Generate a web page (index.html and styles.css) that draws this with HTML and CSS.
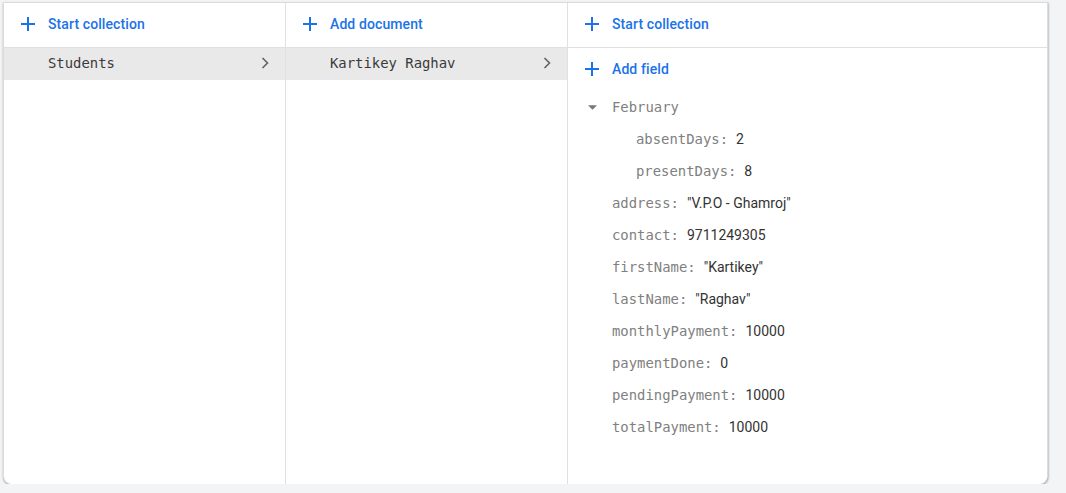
FILE: index.html
```html
<!DOCTYPE html>
<html>
<head>
<meta charset="utf-8">
<link rel="stylesheet" href="styles.css">
</head>
<body>
<div class="card">
  <div class="col">
    <div class="head">
      <svg class="plus" viewBox="0 0 14 14"><path d="M7 0v14M0 7h14"/></svg>
      <span>Start collection</span>
    </div>
    <div class="item sel">
      <span class="mono">Students</span>
      <svg class="chev" viewBox="0 0 8 12"><path d="M1.5 1l5 5-5 5"/></svg>
    </div>
  </div>
  <div class="col">
    <div class="head">
      <svg class="plus" viewBox="0 0 14 14"><path d="M7 0v14M0 7h14"/></svg>
      <span>Add document</span>
    </div>
    <div class="item sel">
      <span class="mono">Kartikey Raghav</span>
      <svg class="chev" viewBox="0 0 8 12"><path d="M1.5 1l5 5-5 5"/></svg>
    </div>
  </div>
  <div class="col last">
    <div class="head">
      <svg class="plus" viewBox="0 0 14 14"><path d="M7 0v14M0 7h14"/></svg>
      <span>Start collection</span>
    </div>
    <div class="head nob">
      <svg class="plus" viewBox="0 0 14 14"><path d="M7 0v14M0 7h14"/></svg>
      <span>Add field</span>
    </div>
    <div class="fields">
      <div class="f map"><svg class="tri" viewBox="0 0 10 5"><path d="M0 0h10L5 5z"/></svg><span class="k">February</span></div>
      <div class="f sub"><span class="k">absentDays:</span><span class="v">2</span></div>
      <div class="f sub"><span class="k">presentDays:</span><span class="v">8</span></div>
      <div class="f"><span class="k">address:</span><span class="v">"V.P.O - Ghamroj"</span></div>
      <div class="f"><span class="k">contact:</span><span class="v">9711249305</span></div>
      <div class="f"><span class="k">firstName:</span><span class="v">"Kartikey"</span></div>
      <div class="f"><span class="k">lastName:</span><span class="v">"Raghav"</span></div>
      <div class="f"><span class="k">monthlyPayment:</span><span class="v">10000</span></div>
      <div class="f"><span class="k">paymentDone:</span><span class="v">0</span></div>
      <div class="f"><span class="k">pendingPayment:</span><span class="v">10000</span></div>
      <div class="f"><span class="k">totalPayment:</span><span class="v">10000</span></div>
    </div>
  </div>
</div>
</body>
</html>
```
FILE: styles.css
```css
html, body {
  margin: 0;
  padding: 0;
  background: #f3f4f6;
  font-family: Roboto, "Liberation Sans", sans-serif;
  overflow: hidden;
}
.card {
  margin: 2px 0 0 3px;
  width: 1045px;
  height: 482px;
  box-sizing: border-box;
  background: #fff;
  border: 1px solid #dcdcdc;
  border-bottom: none;
  border-radius: 0 0 8px 8px;
  box-shadow: 0 1px 2px rgba(0,0,0,0.3), 1px 1px 2px rgba(0,0,0,0.12);
  display: grid;
  grid-template-columns: 282px 282px 1fr;
}
.col {
  border-right: 1px solid #e0e0e0;
  display: flex;
  flex-direction: column;
}
.col.last { border-right: none; }
.head {
  height: 45px;
  box-sizing: border-box;
  padding-bottom: 3px;
  border-bottom: 1px solid #e0e0e0;
  display: flex;
  align-items: center;
  padding-left: 17px;
  color: #1a73e8;
  font-size: 14px;
  font-weight: 500;
  letter-spacing: 0.1px;
}
.head.nob { border-bottom: none; height: 43px; padding-bottom: 1px; }
.plus {
  width: 14px;
  height: 14px;
  margin-right: 13px;
  stroke: #1a73e8;
  stroke-width: 2;
  fill: none;
}
.item {
  height: 32px;
  box-sizing: border-box;
  padding-bottom: 2px;
  display: flex;
  align-items: center;
  padding-left: 44px;
  padding-right: 16px;
}
.item.sel { background: #e9e9e9; }
.mono {
  font-family: "DejaVu Sans Mono", "Liberation Mono", monospace;
  font-size: 13.9px;
  color: #3a3a3a;
  flex: 1;
}
.chev {
  width: 8px;
  height: 12px;
  stroke: #5f6368;
  stroke-width: 1.6;
  fill: none;
}
.fields {
  display: flex;
  flex-direction: column;
}
.f {
  height: 32px;
  display: flex;
  align-items: center;
  padding-left: 44px;
}
.f.sub { padding-left: 68px; }
.f.map { padding-left: 20px; }
.tri {
  width: 9px;
  height: 5px;
  fill: #777;
  margin-right: 15px;
}
.k {
  font-family: "DejaVu Sans Mono", "Liberation Mono", monospace;
  font-size: 13.9px;
  color: #808080;
}
.v {
  font-size: 14px;
  color: #333;
  margin-left: 8px;
}
```
